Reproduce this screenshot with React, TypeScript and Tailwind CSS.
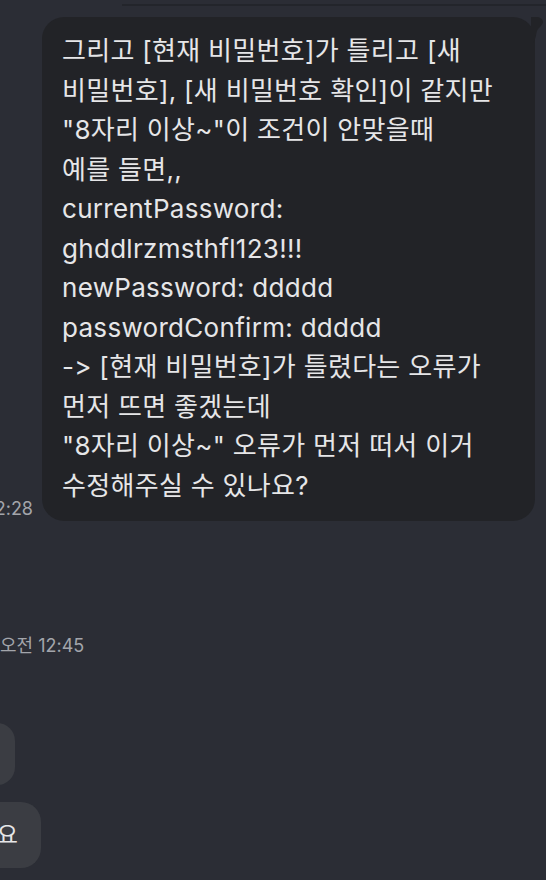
import React from 'react'

const lines = [
  '그리고 [현재 비밀번호]가 틀리고 [새',
  '비밀번호], [새 비밀번호 확인]이 같지만',
  '"8자리 이상~"이 조건이 안맞을때',
  '예를 들면,,',
  'currentPassword:',
  'ghddlrzmsthfl123!!!',
  'newPassword: ddddd',
  'passwordConfirm: ddddd',
  '-> [현재 비밀번호]가 틀렸다는 오류가',
  '먼저 뜨면 좋겠는데',
  '"8자리 이상~" 오류가 먼저 떠서 이거',
  '수정해주실 수 있나요?',
]

const font = { fontFamily: 'Inter, "Noto Sans CJK KR", sans-serif' }

export default function App() {
  return (
    <div className="w-[546px] h-[880px] bg-[#2b2d35] overflow-hidden" style={font}>
      {/* 위쪽 구분선 */}
      <div className="pt-[4px]">
        <div className="ml-[122px] h-[2px] bg-[#23252b]" />
      </div>

      {/* 내가 보낸 메시지 */}
      <div className="flex items-end mt-[11px]">
        <div className="w-[33px] flex justify-end whitespace-nowrap text-[18px] leading-[22px] text-[#a3a5ab] mb-[1px]">
          오전 12:28
        </div>
        <div className="relative ml-[9px] w-[493px] rounded-[22px] bg-[#222327] pl-[20px] pr-[10px] pt-[14px] pb-[16px]">
          <svg
            className="absolute -right-[10px] top-0"
            width="14"
            height="26"
            viewBox="0 0 14 26"
          >
            <path d="M0 0 H5 C9 0 12 2 12 5 C12 8 8 10 6 14 C5 17 5 22 2 26 H0 Z" fill="#222327" />
          </svg>
          <div className="text-[26px] leading-[39.5px] tracking-[0.3px] text-[#e6e6e8] whitespace-nowrap">
            {lines.map((l, i) => (
              <div key={i}>{l}</div>
            ))}
          </div>
        </div>
      </div>

      {/* 상대방 */}
      <div className="mt-[114px] whitespace-nowrap text-[18px] leading-[22px] text-[#a3a5ab]">
        오전 12:45
      </div>

      <div className="mt-[66px] flex flex-col items-start gap-[17px]">
        <div className="h-[62px] w-[60px] -ml-[45px] rounded-[18px] bg-[#3b3d43]" />
        <div className="h-[66px] w-[90px] -ml-[49px] rounded-[20px] bg-[#3b3d43] flex items-center justify-end pr-[23px]">
          <span className="text-[23px] text-[#e6e6e8]">요</span>
        </div>
      </div>
    </div>
  )
}
